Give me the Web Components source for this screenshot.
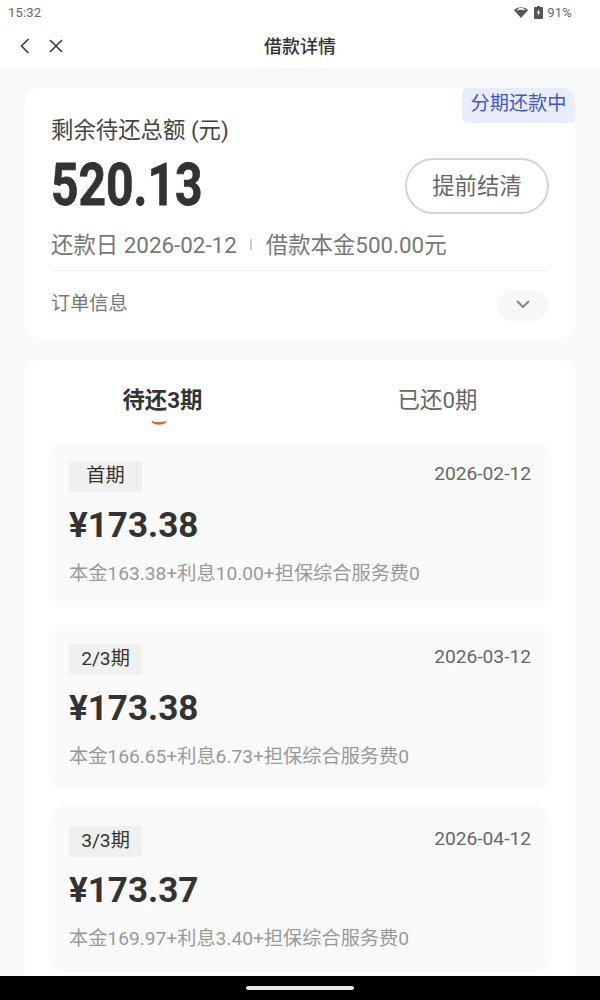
<!DOCTYPE html>
<html lang="zh">
<head>
<meta charset="utf-8">
<title>借款详情</title>
<style>
    html, body { margin: 0; height: 100%; }
    body {
        display: flex;
        flex-direction: column;
        height: 1000px;
        overflow: hidden;
        background: #fff;
        color: #333;
        font-family: Roboto, "Noto Sans CJK SC", sans-serif;
    }
    main {
        flex: 1;
        min-height: 0;
        overflow: hidden;
        padding: 20px 25px 0;
        background: linear-gradient(#f7f8fb, #fafafa 40px);
    }
</style>
</head>
<body>
<status-bar></status-bar>
<nav-bar>借款详情</nav-bar>
<main>
    <summary-card amount="520.13" due="2026-02-12" principal="500.00"></summary-card>
    <plan-list>
        <plan-item tag="首期" date="2026-02-12" amount="¥173.38">本金163.38+利息10.00+担保综合服务费0</plan-item>
        <plan-item tag="2/3期" date="2026-03-12" amount="¥173.38">本金166.65+利息6.73+担保综合服务费0</plan-item>
        <plan-item tag="3/3期" date="2026-04-12" amount="¥173.37">本金169.97+利息3.40+担保综合服务费0</plan-item>
    </plan-list>
</main>
<home-bar></home-bar>

<script>
    class StatusBar extends HTMLElement {
        constructor() {
            super();
            this.attachShadow({ mode: "open" }).innerHTML = `
                <style>
                    :host {
                        display: flex;
                        align-items: center;
                        justify-content: space-between;
                        height: 24px;
                        padding: 0 28px 0 8px;
                        font-size: 13px;
                        color: #666;
                        letter-spacing: 0.2px;
                    }
                    .right { display: flex; align-items: center; gap: 4px; }
                    svg { display: block; }
                </style>
                <span>15:32</span>
                <div class="right">
                    <svg width="14" height="11" viewBox="0 0 14 11">
                        <path d="M0 3.2C3.8-.6 10.2-.6 14 3.2L7 11z" fill="#555"/>
                        <path d="M2.4 3.8C5-.2 9-.2 11.6 3.8 9 2.4 5 2.4 2.4 3.8z" fill="#fff"/>
                    </svg>
                    <svg width="9" height="13" viewBox="0 0 9 13" style="margin-left:2px">
                        <path d="M3 0h3v1h2a1 1 0 0 1 1 1v10a1 1 0 0 1-1 1H1a1 1 0 0 1-1-1V2a1 1 0 0 1 1-1h2z" fill="#555"/>
                        <path d="M5 3 2.8 7h1.4L3.8 10 6.2 6H4.8z" fill="#fff"/>
                    </svg>
                    <span>91%</span>
                </div>
            `;
        }
    }

    class NavBar extends HTMLElement {
        constructor() {
            super();
            this.attachShadow({ mode: "open" }).innerHTML = `
                <style>
                    :host {
                        display: flex;
                        align-items: center;
                        justify-content: center;
                        position: relative;
                        height: 44px;
                        font-size: 18px;
                        font-weight: 500;
                        color: #333;
                    }
                    .title { margin-top: -2px; }
                    .icons {
                        position: absolute;
                        left: 19px;
                        top: 13px;
                        display: flex;
                        gap: 17px;
                    }
                    svg { display: block; fill: none; stroke: #333; stroke-width: 1.5; }
                </style>
                <div class="icons">
                    <svg width="12" height="18" viewBox="0 0 12 18"><path d="M9.5 2 2.5 9l7 7"/></svg>
                    <svg width="16" height="18" viewBox="0 0 16 18"><path d="M2 3l12 12M14 3 2 15"/></svg>
                </div>
                <span class="title"><slot></slot></span>
            `;
        }
    }

    class SummaryCard extends HTMLElement {
        constructor() {
            super();
            this.attachShadow({ mode: "open" });
        }
        connectedCallback() {
            const amount = this.getAttribute("amount");
            const due = this.getAttribute("due");
            const principal = this.getAttribute("principal");
            this.shadowRoot.innerHTML = `
                <style>
                    :host {
                        display: block;
                        position: relative;
                        box-sizing: border-box;
                        height: 250px;
                        padding: 27px 26px 0;
                        background: #fff;
                        border-radius: 14px;
                    }
                    .badge {
                        position: absolute;
                        top: 0;
                        right: 0;
                        width: 113px;
                        height: 35px;
                        line-height: 32px;
                        text-align: center;
                        font-size: 19.2px;
                        color: #3f56d0;
                        background: #e9edfb;
                        border-radius: 6px 14px 2px 6px;
                    }
                    .label { font-size: 22.4px; line-height: 30px; color: #444; }
                    .row {
                        display: flex;
                        align-items: center;
                        justify-content: space-between;
                        height: 56px;
                        margin-top: 13px;
                    }
                    .amount {
                        display: inline-block;
                        font-size: 60px;
                        font-weight: 700;
                        color: #333;
                        line-height: 54px;
                        margin-bottom: 2px;
                        -webkit-text-stroke: 0.8px #333;
                        transform: scaleX(0.8);
                        transform-origin: left center;
                    }
                    .settle {
                        box-sizing: border-box;
                        width: 144px;
                        height: 56px;
                        line-height: 52px;
                        text-align: center;
                        font-size: 22.4px;
                        color: #666;
                        border: 2px solid #d4d4d4;
                        border-radius: 28px;
                    }
                    .info {
                        display: flex;
                        align-items: center;
                        margin-top: 16px;
                        height: 26px;
                        padding-bottom: 4px;
                        font-size: 22.4px;
                        color: #777;
                    }
                    .sep { width: 2px; height: 11px; margin: 3px 14px 0 13px; background: #ccc; }
                    .order {
                        display: flex;
                        align-items: center;
                        justify-content: space-between;
                        margin-top: 10px;
                        padding-top: 19px;
                        border-top: 1px solid #eee;
                        font-size: 19.2px;
                        color: #777;
                    }
                    .order span { margin-top: -8px; }
                    .pill {
                        display: flex;
                        align-items: center;
                        justify-content: center;
                        width: 51px;
                        height: 31px;
                        margin-right: 1px;
                        padding-bottom: 2px;
                        box-sizing: border-box;
                        background: #f7f7f7;
                        border-radius: 16px;
                    }
                    svg { display: block; fill: none; stroke: #888; stroke-width: 2; }
                </style>
                <div class="badge">分期还款中</div>
                <div class="label">剩余待还总额 (元)</div>
                <div class="row">
                    <span class="amount">${amount}</span>
                    <div class="settle">提前结清</div>
                </div>
                <div class="info">
                    <span>还款日 ${due}</span><i class="sep"></i><span>借款本金${principal}元</span>
                </div>
                <div class="order">
                    <span>订单信息</span>
                    <div class="pill"><svg width="16" height="10" viewBox="0 0 16 10"><path d="M2 1 8 7l6-6"/></svg></div>
                </div>
            `;
        }
    }

    class PlanList extends HTMLElement {
        constructor() {
            super();
            this.attachShadow({ mode: "open" }).innerHTML = `
                <style>
                    :host {
                        display: block;
                        margin-top: 22px;
                        padding: 0 24px 20px;
                        background: #fff;
                        border-radius: 14px 14px 0 0;
                    }
                    .tabs { display: flex; height: 82px; margin: 0 -24px; }
                    .tab {
                        flex: 1;
                        display: flex;
                        flex-direction: column;
                        align-items: center;
                        padding-top: 25px;
                        font-size: 22.4px;
                        line-height: 30px;
                        color: #666;
                    }
                    .tab.on { color: #333; font-weight: 700; }
                    .smile { display: block; margin: 5px 8px 0 0; }
                    .items { display: flex; flex-direction: column; gap: 17.5px; }
                </style>
                <div class="tabs">
                    <div class="tab on">
                        <span>待还3期</span>
                        <svg class="smile" width="16" height="6" viewBox="0 0 16 6"><path d="M1 1.5C5 3.2 11 3.2 15 1.5 13.5 5 2.5 5 1 1.5z" fill="#f0551c" stroke="#f0551c"/></svg>
                    </div>
                    <div class="tab"><span>已还0期</span></div>
                </div>
                <div class="items"><slot></slot></div>
            `;
        }
    }

    class PlanItem extends HTMLElement {
        constructor() {
            super();
            this.attachShadow({ mode: "open" });
        }
        connectedCallback() {
            this.shadowRoot.innerHTML = `
                <style>
                    :host {
                        display: block;
                        box-sizing: border-box;
                        height: 165px;
                        padding: 19px 20px 0;
                        background: #fafafa;
                        border-radius: 14px;
                    }
                    .top { display: flex; align-items: flex-start; justify-content: space-between; }
                    .tag {
                        width: 73px;
                        height: 31px;
                        line-height: 30px;
                        text-align: center;
                        font-size: 19.2px;
                        color: #333;
                        background: #f0f0f0;
                        border-radius: 3px;
                    }
                    .date { font-size: 19.2px; line-height: 26px; color: #666; }
                    .amount {
                        margin-top: 14px;
                        font-size: 35px;
                        font-weight: 700;
                        line-height: 40px;
                        color: #333;
                    }
                    .detail { margin-top: 13px; font-size: 19.2px; line-height: 29px; color: #999; }
                </style>
                <div class="top">
                    <div class="tag">${this.getAttribute("tag")}</div>
                    <div class="date">${this.getAttribute("date")}</div>
                </div>
                <div class="amount">${this.getAttribute("amount")}</div>
                <div class="detail"><slot></slot></div>
            `;
        }
    }

    class HomeBar extends HTMLElement {
        constructor() {
            super();
            this.attachShadow({ mode: "open" }).innerHTML = `
                <style>
                    :host {
                        display: flex;
                        flex: none;
                        align-items: center;
                        justify-content: center;
                        height: 24px;
                        background: #000;
                    }
                    i { width: 108px; height: 4px; margin-top: -1px; background: #e8e8e8; border-radius: 2px; }
                </style>
                <i></i>
            `;
        }
    }

    customElements.define("status-bar", StatusBar);
    customElements.define("nav-bar", NavBar);
    customElements.define("summary-card", SummaryCard);
    customElements.define("plan-list", PlanList);
    customElements.define("plan-item", PlanItem);
    customElements.define("home-bar", HomeBar);
</script>
</body>
</html>
